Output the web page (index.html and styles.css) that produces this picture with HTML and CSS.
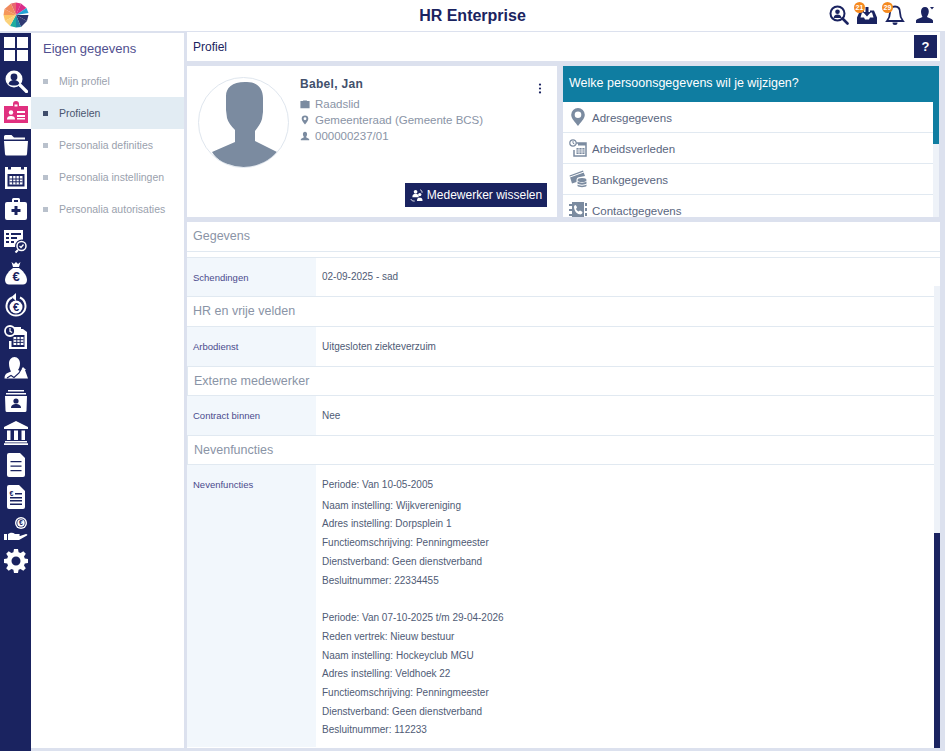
FILE: index.html
```html
<!DOCTYPE html>
<html lang="nl">
<head>
<meta charset="utf-8">
<title>HR Enterprise</title>
<link rel="stylesheet" href="styles.css">
</head>
<body>
<div class="app">
  <header class="topbar">
    <svg class="logo" viewBox="0 0 26 26" aria-hidden="true">
      <path d="M13 13 8 1.500 13 .5Z" fill="#e8676f"/><path d="M13 13V.5L18 1.500Z" fill="#e3337f"/>
      <path d="M13 13 18 1.500 23.500 6Z" fill="#d92d8a"/><path d="M13 13 23.500 6 25.500 11Z" fill="#22a3d6"/>
      <path d="M13 13H25.500L24 19Z" fill="#27306b"/><path d="M13 13 24 19 18 25Z" fill="#2f3a73"/>
      <path d="M13 13 18 25 13 25.500Z" fill="#1b87a8"/><path d="M13 13V25.500L7 24Z" fill="#1dae9f"/>
      <path d="M13 13 7 24 2 19Z" fill="#fbd27a"/><path d="M13 13 2 19 .5 13Z" fill="#fcc766"/>
      <path d="M13 13H.5L1.500 7Z" fill="#f5975a"/><path d="M13 13 1.500 7 8 1.500Z" fill="#f08a5d"/>
    </svg>
    <h1 class="brand">HR Enterprise</h1>
    <div class="top-actions">
      <svg class="top-icon" viewBox="0 0 20 20"><circle cx="8.500" cy="8.500" r="7" fill="none" stroke="#1a2360" stroke-width="2"/><circle cx="8.500" cy="6.700" r="2.300" fill="#1a2360"/><path d="M4.500 13c.5-3 2-3.500 4-3.500s3.500.5 4 3.500Z" fill="#1a2360"/><path d="m13.500 13.500 5 5" stroke="#1a2360" stroke-width="2.600" stroke-linecap="round"/></svg>
      <span class="top-badged inbox">
        <svg class="top-icon" viewBox="0 0 20 20"><path d="M3 5.500h4v2H5l-1.500 5H7l1 2h4l1-2h3.500L15 7.500h-2v-2h4l3 7V19H0v-6.500Z" fill="#1a2360"/><path d="M8.500 2h3v5h2.500L10 11.500 6 7h2.500Z" fill="#1a2360"/></svg>
        <span class="badge">21</span>
      </span>
      <span class="top-badged bell">
        <svg class="top-icon" viewBox="0 0 20 20"><path d="M10 1.500c3.500 0 5 2.700 5 6 0 4 1 6 3 8.500H2c2-2.500 3-4.500 3-8.500 0-3.300 1.500-6 5-6Z" fill="none" stroke="#1a2360" stroke-width="1.800"/><path d="M7.500 17.500a2.500 2.500 0 0 0 5 0Z" fill="#1a2360"/></svg>
        <span class="badge">29</span>
      </span>
      <svg class="top-icon user" viewBox="0 0 20 20"><path d="M10 2c2.500 0 3.800 2 3.800 4.500S12.300 11 12 12c2 1 5 1.500 6 3.500V18H1v-2.500C2 13.500 6 13 7.500 12 7 11 6 9 6 6.500S7.500 2 10 2Z" fill="#1a2360"/><path d="m15 2 4 0-2 2.500Z" fill="#1a2360"/></svg>
    </div>
  </header>
  <div class="workspace">
    <nav class="rail">
      <a class="rail-item"><svg viewBox="0 0 24 24"><path d="M0 0h11v11H0ZM13 0h11v11H13ZM0 13h11v11H0ZM13 13h11v11H13Z" fill="#fff"/></svg></a>
      <a class="rail-item"><svg viewBox="0 0 24 24"><circle cx="10" cy="10" r="8.500" fill="#fff"/><circle cx="10" cy="8" r="3.400" fill="#1a2360"/><path d="M4.500 15c.8-3 3-4 5.500-4s4.700 1 5.500 4c-3 2-8 2-11 0Z" fill="#1a2360"/><path d="m16 16 6.500 6.500" stroke="#fff" stroke-width="3.200" stroke-linecap="round"/></svg></a>
      <a class="rail-item active"><svg viewBox="0 0 24 24"><path d="M9 3a3 3 0 0 1 6 0v2h9v17H0V5h9Z" fill="#e0307f"/><rect x="10.500" y="3.500" width="3" height="2" fill="#fff"/><circle cx="7" cy="11.500" r="2.200" fill="#fff"/><path d="M3 18.500c0-3 2-3.500 4-3.500s4 .5 4 3.500Z" fill="#fff"/><path d="M13 10h8v2h-8ZM13 14h8v2h-8ZM13 17h8v1.500h-8Z" fill="#fff"/></svg></a>
      <a class="rail-item"><svg viewBox="0 0 24 24"><path d="M0 3.500a1.500 1.500 0 0 1 1.500-1.500h6L10 4.500h11v2H0Z" fill="#fff"/><path d="M0 8h24l-1 13a1.500 1.500 0 0 1-1.500 1.500h-19A1.500 1.500 0 0 1 1 21Z" fill="#fff"/></svg></a>
      <a class="rail-item"><svg viewBox="0 0 24 24"><path d="M1 2h3v2.500h3V2h10v2.500h3V2h3v22H1Zm2.500 7v12.500h17V9Z" fill="#fff"/><path d="M5.500 11h13v8.500h-13Z" fill="#fff"/><path d="M8.700 11v8.500M12 11v8.500M15.300 11v8.500M5.500 14h13M5.500 16.800h13" stroke="#1a2360" stroke-width="1"/></svg></a>
      <a class="rail-item"><svg viewBox="0 0 24 24"><path d="M8 5V2.500A1.500 1.500 0 0 1 9.500 1h5A1.500 1.500 0 0 1 16 2.500V5h5a2 2 0 0 1 2 2v14a2 2 0 0 1-2 2H3a2 2 0 0 1-2-2V7a2 2 0 0 1 2-2Zm2 0h4V3h-4Z" fill="#fff"/><path d="M10.500 9h3v3h3v3h-3v3h-3v-3h-3v-3h3Z" fill="#1a2360"/></svg></a>
      <a class="rail-item"><svg viewBox="0 0 24 24"><path d="M0 1h19v9.500a7 7 0 0 0-8 7.500H0Z" fill="#fff"/><path d="M2 4h3v2H2ZM7 4h10v2H7ZM2 8h3v2H2ZM7 8h6v2H7ZM2 12h3v2H2ZM7 12h3v2H7Z" fill="#1a2360"/><circle cx="17.500" cy="17" r="4.500" fill="none" stroke="#fff" stroke-width="1.500"/><path d="m15.500 17 1.500 1.500 2.500-3" fill="none" stroke="#fff" stroke-width="1.300"/><path d="m14 21-2.500 2.500" stroke="#fff" stroke-width="2"/></svg></a>
      <a class="rail-item"><svg viewBox="0 0 24 24"><path d="M7.500 1 10 3l2-2 2 2 2.500-2-1.500 5H9Z" fill="#fff"/><path d="M9 7h6c3 2 8 7 8 12 0 3-2 4.500-4 4.500H5c-2 0-4-1.500-4-4.500 0-5 5-10 8-12Z" fill="#fff"/><text x="12" y="20" class="euro">€</text></svg></a>
      <a class="rail-item"><svg viewBox="0 0 24 24"><path d="M8 4.500a9.500 9.500 0 1 0 8 0" fill="none" stroke="#fff" stroke-width="2"/><path d="M12 0v8L7.500 4Z" fill="#fff"/><circle cx="12" cy="14" r="6.500" fill="#fff"/><text x="12" y="18" class="euro small">€</text></svg></a>
      <a class="rail-item"><svg viewBox="0 0 24 24"><path d="M5 4h14l4 3v17H5v-8h2.500v6h13V10h-13v1H5Z" fill="#fff"/><path d="M9 2h8v6H9Z" fill="#fff"/><path d="M9.500 12h10v8h-10Z" fill="#fff"/><path d="M12.800 12v8M16.200 12v8M9.500 14.700h10M9.500 17.400h10" stroke="#1a2360"/><circle cx="6" cy="6" r="5" fill="#1a2360" stroke="#fff" stroke-width="1.800"/><path d="M6 3v3.300l2.200 1.200" fill="none" stroke="#fff" stroke-width="1.200"/></svg></a>
      <a class="rail-item"><svg viewBox="0 0 24 24"><path d="M10.500 0c3.300 0 5.500 3 5.500 6.500 0 3-1 5-2 6.500l2 1 3-4 1.500 1.500 1.500 1-1 .5 3 8.500H.5c0-3 1-4.500 3-5.500l3.500-1.500C6 12.500 5 10 5 6.500S7.200 0 10.500 0Z" fill="#fff"/><path d="m3 21 4-2.500 3 2 5-4.500 2.500-4.500" fill="none" stroke="#1a2360" stroke-width="1.100"/></svg></a>
      <a class="rail-item"><svg viewBox="0 0 24 24"><path d="M4 1h16v1.500H4ZM2 4h20v1.500H2Z" fill="#fff"/><path d="M1 7h22l-.5 14.500a1.500 1.500 0 0 1-1.500 1.500H3a1.500 1.500 0 0 1-1.500-1.500Z" fill="#fff"/><circle cx="12" cy="12" r="2.600" fill="#1a2360"/><path d="M7 19c0-3 2.500-4 5-4s5 1 5 4Z" fill="#1a2360"/></svg></a>
      <a class="rail-item"><svg viewBox="0 0 24 24"><path d="M12 0 24 6v2H0V6Z" fill="#fff"/><path d="M3 9.500h3.500V19H3ZM10 9.500h4V19h-4ZM17.500 9.500H21V19h-3.500ZM1 20h22v1.500H1ZM0 22.300h24V24H0Z" fill="#fff"/></svg></a>
      <a class="rail-item"><svg viewBox="0 0 24 24"><path d="M3 2a2 2 0 0 1 2-2h11l5 5v17a2 2 0 0 1-2 2H5a2 2 0 0 1-2-2Z" fill="#fff"/><path d="M6.500 8h11v1.300h-11ZM6.500 12.500h11v1.300h-11ZM6.500 17h11v1.300h-11Z" fill="#1a2360"/></svg></a>
      <a class="rail-item"><svg viewBox="0 0 24 24"><path d="M3 2a2 2 0 0 1 2-2h10l6 6v16a2 2 0 0 1-2 2H5a2 2 0 0 1-2-2Z" fill="#fff"/><path d="M6 12h12v1.400H6ZM6 15h12v1.400H6ZM6 18.500h12v1.400H6ZM11 8h7v1.400h-7Z" fill="#1a2360"/><text x="7.500" y="10.500" class="euro tiny">€</text></svg></a>
      <a class="rail-item"><svg viewBox="0 0 24 24"><circle cx="17" cy="6" r="6" fill="#fff"/><circle cx="17" cy="6" r="4.600" fill="#1a2360"/><circle cx="17" cy="6" r="3.700" fill="#fff"/><text x="17" y="8.400" class="euro tiny">€</text><path d="M0 17h3v6H0ZM4 17c3-2 5-1.500 7 0h4c1 0 1 2 0 2h-4 5l6-2c1.500 0 1.500 1 1 1.500L15 23H4Z" fill="#fff"/></svg></a>
      <a class="rail-item"><svg viewBox="0 0 24 24"><path fill-rule="evenodd" d="M10 0h4l.6 3.200 2 .8L19.300 2.200l2.500 2.500L20 7.400l.8 2L24 10v4l-3.200.6-.8 2 1.800 2.700-2.500 2.500-2.700-1.800-2 .8L14 24h-4l-.6-3.200-2-.8-2.700 1.800-2.500-2.500L4 16.600l-.8-2L0 14v-4l3.200-.6.8-2-1.800-2.700 2.500-2.500L7.400 4l2-.8ZM12 7.500a4.500 4.500 0 1 0 0 9 4.500 4.500 0 0 0 0-9Z" fill="#fff"/></svg></a>
    </nav>
    <aside class="subnav">
      <h2 class="subnav-title">Eigen gegevens</h2>
      <a class="subnav-item">Mijn profiel</a>
      <a class="subnav-item current">Profielen</a>
      <a class="subnav-item">Personalia definities</a>
      <a class="subnav-item">Personalia instellingen</a>
      <a class="subnav-item">Personalia autorisaties</a>
    </aside>
    <main class="content">
      <div class="pagebar">
        <span class="pagebar-title">Profiel</span>
        <button class="help" type="button">?</button>
      </div>
      <div class="top-cards">
        <section class="person">
          <div class="avatar">
            <svg viewBox="0 0 90 90"><path d="M26 4h22c10 0 16 6 16 16v14l-1 7c-1 4-4 8-7 12v10l22 11c-7 11-20 16-33 16s-25-5-32-16l23-10V52c-4-4-7-8-8-12l-1-8V18c0-8 6-14 19-14Z" fill="#7b8ba0" transform="translate(0 0)"/></svg>
          </div>
          <div class="person-info">
            <div class="person-name">Babel, Jan</div>
            <div class="person-line"><svg viewBox="0 0 12 12"><path d="M4 2.500V1.500h4v1h3.500v8.500H.5V2.500Zm1 0h2V2H5Z" fill="#7b8ba0"/></svg>Raadslid</div>
            <div class="person-line"><svg viewBox="0 0 12 12"><path fill-rule="evenodd" d="M6 .5a4 4 0 0 1 4 4c0 2.500-2.500 5-4 7-1.500-2-4-4.500-4-7a4 4 0 0 1 4-4Zm0 2.300a1.700 1.700 0 1 0 0 3.400 1.700 1.700 0 0 0 0-3.400Z" fill="#7b8ba0"/></svg>Gemeenteraad (Gemeente BCS)</div>
            <div class="person-line"><svg viewBox="0 0 12 12"><path d="M6 1c1.700 0 2.500 1.300 2.500 3S7.500 6.500 7.300 7.500L11 9.500V11H1V9.500l3.700-2C4.500 6.500 3.500 5.700 3.500 4S4.300 1 6 1Z" fill="#7b8ba0"/></svg>000000237/01</div>
          </div>
          <svg class="kebab" viewBox="0 0 4 14"><circle cx="2" cy="2" r="1.400"/><circle cx="2" cy="7" r="1.400"/><circle cx="2" cy="12" r="1.400"/></svg>
          <button class="switch" type="button"><svg viewBox="0 0 14 14"><circle cx="6" cy="3" r="2" fill="#fff"/><path d="M2.500 9c0-3 1.500-3.500 3.500-3.500S9.500 6 9.500 9Z" fill="#fff"/><circle cx="10.500" cy="6" r="1.800" fill="#fff"/><path d="M7.500 13c0-3 1.200-3.500 3-3.500s3 .5 3 3.500Z" fill="#fff"/><path d="M1 11c.5 1.500 2 2 4 2M11 1c1 0 2 1 2 3" fill="none" stroke="#fff"/></svg>Medewerker wisselen</button>
        </section>
        <section class="changes">
          <h2 class="changes-head">Welke persoonsgegevens wil je wijzigen?</h2>
          <div class="changes-body">
            <ul class="changes-list">
              <li class="change"><svg viewBox="0 0 18 18"><path fill-rule="evenodd" d="M9 0a6.800 6.800 0 0 1 6.800 6.800C15.800 11 11.500 14.500 9 18 6.500 14.500 2.200 11 2.200 6.800A6.800 6.800 0 0 1 9 0Zm0 3.500a3.300 3.300 0 1 0 0 6.600 3.300 3.300 0 0 0 0-6.600Z" fill="#7b8ba0"/></svg>Adresgegevens</li>
              <li class="change"><svg viewBox="0 0 18 18"><path d="M6 4h11v13H5v-6" fill="none" stroke="#7b8ba0" stroke-width="1.500"/><path d="M9 4h8v2.500H9ZM7.500 9h8v6h-8Z" fill="#7b8ba0"/><path d="M10 9v6M13 9v6M7.500 11h8M7.500 13h8" stroke="#fff" stroke-width=".7"/><circle cx="4" cy="4" r="3.200" fill="#fff" stroke="#7b8ba0" stroke-width="1.200"/><path d="M4 2v2.200l1.500.8" stroke="#7b8ba0" fill="none"/></svg>Arbeidsverleden</li>
              <li class="change"><svg viewBox="0 0 18 18"><path d="M.5 5.500 14 .5l2 5.500-5 1c-2 0-3.500 1-3.500 3v2l-4.500 1.500Z" fill="#7b8ba0"/><path d="M1 7l14-5" stroke="#fff"/><ellipse cx="13" cy="10" rx="4.500" ry="2" fill="#7b8ba0"/><path d="M8.500 11.500c1 1.500 8 1.500 9 0v2c-1 1.500-8 1.500-9 0ZM8.500 14.500c1 1.500 8 1.500 9 0v1.500c-1 1.500-8 1.500-9 0Z" fill="#7b8ba0"/></svg>Bankgegevens</li>
              <li class="change"><svg viewBox="0 0 18 18"><path d="M3 1h12v16H3Z" fill="#7b8ba0"/><path d="M0 3h3v2H0ZM0 8h3v2H0ZM0 13h3v2H0ZM16 2h2v3h-2ZM16 7h2v3h-2ZM16 12h2v3h-2Z" fill="#7b8ba0"/><path d="M6 4c1 0 2 2 2 2.500L7 8c.5 1 1.500 2 2.500 2.500l1.500-1c.5 0 2.500 1 2.500 2-.5 2-2 2-3 1.800C7 12.500 5 9 5 5.500Z" fill="#fff"/></svg>Contactgegevens</li>
            </ul>
            <div class="changes-scroll"></div>
          </div>
        </section>
      </div>
      <section class="details">
        <h2 class="section-title first">Gegevens</h2>
        <div class="details-body">
          <div class="details-scroll">
            <div class="row schend">
              <div class="row-label">Schendingen</div>
              <div class="row-value">02-09-2025 - sad</div>
            </div>
            <h3 class="section-title plain">HR en vrije velden</h3>
            <div class="row arbo">
              <div class="row-label">Arbodienst</div>
              <div class="row-value">Uitgesloten ziekteverzuim</div>
            </div>
            <h3 class="section-title">Externe medewerker</h3>
            <div class="row contract">
              <div class="row-label">Contract binnen</div>
              <div class="row-value">Nee</div>
            </div>
            <h3 class="section-title">Nevenfuncties</h3>
            <div class="row neven">
              <div class="row-label">Nevenfuncties</div>
              <div class="row-value">
                <p class="first-line">Periode: Van 10-05-2005</p>
                <p>Naam instelling: Wijkvereniging</p>
                <p>Adres instelling: Dorpsplein 1</p>
                <p>Functieomschrijving: Penningmeester</p>
                <p>Dienstverband: Geen dienstverband</p>
                <p>Besluitnummer: 22334455</p>
                <p class="group">Periode: Van 07-10-2025 t/m 29-04-2026</p>
                <p>Reden vertrek: Nieuw bestuur</p>
                <p>Naam instelling: Hockeyclub MGU</p>
                <p>Adres instelling: Veldhoek 22</p>
                <p>Functieomschrijving: Penningmeester</p>
                <p>Dienstverband: Geen dienstverband</p>
                <p>Besluitnummer: 112233</p>
              </div>
            </div>
          </div>
          <div class="page-scroll"><div class="page-thumb"></div></div>
        </div>
      </section>
    </main>
  </div>
</div>
</body>
</html>
```
FILE: styles.css
```css
* { box-sizing: border-box; }
html, body { margin: 0; height: 100%; overflow: hidden; }
body { font-family: "Liberation Sans", Arial, sans-serif; background: #dce1ee; color: #4a5670; }
h1, h2, h3, p, ul { margin: 0; padding: 0; font-weight: normal; }
ul { list-style: none; }
button { font-family: inherit; cursor: pointer; }

.app { width: 945px; height: 751px; display: flex; flex-direction: column; background: #dce1ee; }

.topbar { height: 31px; flex: none; background: #fff; position: relative; display: flex; align-items: center; justify-content: center; }
.logo { position: absolute; left: 3px; top: 2px; width: 26px; height: 26px; }
.brand { font-size: 16px; font-weight: bold; color: #1a2360; margin-left: 0; }
.top-actions { position: absolute; left: 829px; top: 5px; display: flex; gap: 9px; align-items: center; }
.top-icon { width: 20px; height: 20px; display: block; }
.top-badged { position: relative; display: block; }
.top-actions .inbox { margin-left: -1px; }
.top-actions .bell { margin-left: -1px; }
.top-actions .user { margin-left: 1px; }
.badge { position: absolute; left: -3px; top: -3px; width: 11px; height: 11px; border-radius: 50%; background: #f58a1f; color: #fff; font-size: 7px; font-weight: bold; line-height: 11px; text-align: center; }

.workspace { flex: 1; min-height: 0; display: flex; padding-top: 2px; }

.rail { width: 31px; flex: none; background: #1a2360; padding-top: 0; display: flex; flex-direction: column; margin-bottom: 0; }
.rail-item { height: 32px; flex: none; display: flex; align-items: center; justify-content: center; }
.rail-item svg { width: 24px; height: 24px; display: block; }
.rail-item.active { background: #fff; }
.euro { font-family: "Liberation Sans", sans-serif; font-size: 13px; font-weight: bold; fill: #1a2360; text-anchor: middle; }
.euro.small { font-size: 11px; }
.euro.tiny { font-size: 7px; }

.subnav { width: 153px; flex: none; background: #fff; margin-right: 3px; margin-bottom: 3px; }
.subnav-title { font-size: 13px; color: #51508f; height: 32px; padding: 8px 0 0 12px; line-height: 16px; }
.subnav-item { display: flex; align-items: center; height: 32px; padding-left: 12px; font-size: 10.500px; color: #9aa1ad; gap: 11px; }
.subnav-item::before { content: ""; width: 5px; height: 5px; background: #b9c1cc; flex: none; }
.subnav-item.current { background: #e2ecf3; color: #4a5670; }
.subnav-item.current::before { background: #3f4d6b; }

.content { width: 753px; flex: none; display: flex; flex-direction: column; padding-bottom: 3px; }
.pagebar { height: 29px; flex: none; background: #fff; display: flex; align-items: center; justify-content: space-between; padding: 0 3px 0 6px; margin-top: -1px; }
.pagebar-title { font-size: 12px; color: #1a2360; }
.help { width: 23px; height: 23px; border: 0; padding: 0; background: #1a2360; color: #fff; font-size: 13px; font-weight: bold; line-height: 23px; }

.top-cards { height: 151px; flex: none; margin-top: 5px; display: flex; gap: 6px; }
.person { width: 370px; flex: none; background: #fff; position: relative; display: flex; padding: 11px 0 0 11px; gap: 11px; }
.avatar { width: 91px; height: 91px; border-radius: 50%; border: 1px solid #dfe6ee; overflow: hidden; flex: none; }
.avatar svg { width: 90px; height: 90px; display: block; }
.person-info { padding-top: 0; }
.person-name { font-size: 12px; font-weight: bold; color: #42506c; letter-spacing: .3px; line-height: 14px; margin-bottom: 5px; }
.person-line { display: flex; align-items: center; gap: 5px; font-size: 11.500px; color: #8a94a6; height: 16px; }
.person-line svg { width: 10px; height: 10px; flex: none; }
.kebab { position: absolute; left: 351px; top: 17px; width: 4px; height: 11px; fill: #1a2360; }
.switch { position: absolute; left: 218px; top: 117px; width: 142px; height: 24px; border: 1px solid #1a2360; background: #1a2360; color: #fff; font-size: 12px; display: flex; align-items: center; justify-content: center; gap: 4px; padding: 0; }
.switch svg { width: 13px; height: 13px; }

.changes { flex: 1; min-width: 0; margin-right: 1px; background: #fff; overflow: hidden; display: flex; flex-direction: column; }
.changes-head { height: 36px; flex: none; background: #0f7da1; color: #fff; font-size: 12.500px; line-height: 35px; padding-left: 6px; }
.changes-body { flex: 1; min-height: 0; display: flex; overflow: hidden; }
.changes-list { flex: 1; min-width: 0; }
.change { height: 31px; display: flex; align-items: center; gap: 5px; padding: 2px 0 0 6px; font-size: 11.500px; color: #5a6680; border-bottom: 1px solid #e1e9f1; }
.change svg { width: 18px; height: 18px; flex: none; margin-top: -3px; }
.changes-scroll { width: 6px; flex: none; background: linear-gradient(#0f7da1 0 42px, #eef2f8 42px); }

.details { flex: 1; min-height: 0; margin-top: 5px; background: #fff; display: flex; flex-direction: column; }
.section-title { font-size: 12.500px; color: #8a94a6; height: 30px; line-height: 28px; padding-left: 6px; border: 1px solid #e1e9f1; border-left: 1px solid #e1e9f1; border-right: 1px solid #e1e9f1; flex: none; }
.section-title.first { border-width: 0 0 1px; height: 30px; margin: 0; }
.section-title.plain { border-width: 0 0 1px; }
.details-body { flex: 1; min-height: 0; display: flex; position: relative; padding-top: 5px; }
.details-scroll { flex: 1; min-width: 0; border-top: 1px solid #e1e9f1; }
.row { display: flex; }
.row-label { width: 129px; flex: none; background: #f2f7fc; color: #4a4a8c; font-size: 9.500px; padding-left: 6px; display: flex; align-items: center; }
.row-value { flex: 1; padding-left: 6px; font-size: 10px; color: #4f5b75; display: flex; align-items: center; border-bottom: 1px solid transparent; }
.schend { height: 39px; border-bottom: 1px solid #e1e9f1; }
.arbo { height: 39px; }
.contract { height: 39px; }
.neven { flex: 1; height: 282px; }
.neven .row-label { align-items: flex-start; padding-top: 14px; }
.neven .row-value { display: block; padding-top: 11px; }
.neven p { line-height: 18.700px; font-size: 10px; }
.neven p.first-line { margin-bottom: 2px; }
.neven p.group { margin-top: 19px; }
.page-scroll { position: absolute; right: 0; top: 34px; bottom: 0; width: 6px; background: #eef2f8; }
.page-thumb { position: absolute; left: 0; right: 0; bottom: 0; height: 215px; background: #1a2360; }
```
